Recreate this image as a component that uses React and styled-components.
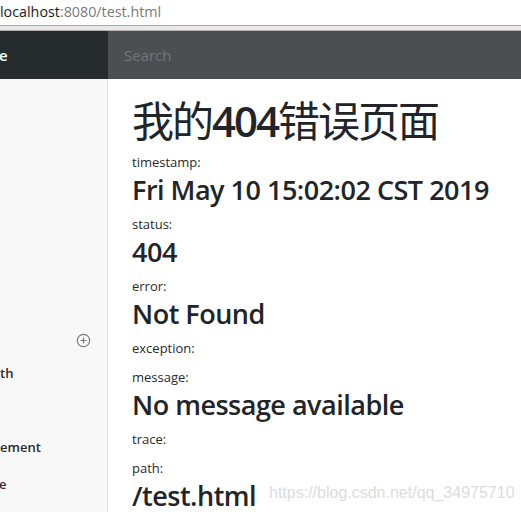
import React from "react";
import styled, { createGlobalStyle } from "styled-components";

const Global = createGlobalStyle`
  html, body { margin: 0; padding: 0; background: #fff; }
  body { font-family: "Open Sans", "Noto Sans CJK SC", sans-serif; overflow: hidden; }
`;

const Page = styled.div`
  width: 521px;
  height: 512px;
  display: flex;
  flex-direction: column;
  position: relative;
  overflow: hidden;
`;

const AddressBar = styled.div`
  display: flex;
  align-items: center;
  font-family: "Open Sans", sans-serif;
  font-size: 14.3px;
  white-space: nowrap;
  border-bottom: 1px solid #a6a6a6;
  box-sizing: border-box;
  height: 26px;
  padding-bottom: 2px;
  background: #fff;
`;

const Host = styled.span`
  color: ${(p) => (p.$dim ? "#7a7a7a" : "#1a1a1a")};
`;

const ChromeStrip = styled.div`
  height: 4px;
  background: #e9e9e9;
  border-bottom: 1px solid #b4aeae;
`;

const NavBar = styled.div`
  height: 48px;
  display: flex;
  background: #4b4f52;
`;

const Brand = styled.div`
  width: 108px;
  flex-shrink: 0;
  background: #262b2d;
  color: #fff;
  font-size: 15px;
  font-weight: 600;
  display: flex;
  align-items: center;
  overflow: hidden;
  white-space: nowrap;
  text-indent: -1px;
`;

const SearchBox = styled.div`
  flex: 1;
  display: flex;
  align-items: center;
  padding-left: 16px;
  color: #72777a;
  font-size: 15px;
`;

const Body = styled.div`
  flex: 1;
  display: flex;
  min-height: 0;
`;

const Sidebar = styled.div`
  width: 107px;
  flex-shrink: 0;
  background: #f8f8f8;
  border-right: 1px solid #e6e6e6;
  display: flex;
  flex-direction: column;
  overflow: hidden;
  padding-top: 250px;
`;

const SideHeader = styled.div`
  height: 22px;
  display: flex;
  justify-content: flex-end;
  align-items: center;
  padding-right: 16px;
  color: #7c7c7c;
`;

const SideItem = styled.div`
  height: 37px;
  display: flex;
  align-items: center;
  font-size: 13px;
  font-weight: 600;
  color: #2b2b2b;
  white-space: nowrap;
  margin-top: ${(p) => (p.$first ? 3 : 0)}px;
  margin-left: ${(p) => p.$shift || 0}px;
`;

const Main = styled.div`
  flex: 1;
  padding: 12px 24px 0;
  color: #212529;
  min-width: 0;
`;

const Title = styled.h1`
  margin: 0 0 3px;
  font-size: 42px;
  font-weight: 400;
  line-height: 56px;
  font-family: "Noto Sans CJK SC", "Open Sans", sans-serif;
  letter-spacing: -2px;
  white-space: nowrap;
`;

const Num = styled.span`
  font-weight: 600;
  font-family: "Open Sans", sans-serif;
`;

const Field = styled.div`
  margin-bottom: ${(p) => (p.$empty ? 9 : 7)}px;
`;

const Label = styled.div`
  font-size: 13px;
  line-height: 20px;
  color: #2a2a2a;
`;

const Value = styled.div`
  font-size: 27px;
  line-height: 35px;
  font-weight: 600;
  letter-spacing: -0.5px;
  color: #212529;
  white-space: nowrap;
`;

const Watermark = styled.div`
  position: absolute;
  left: 269px;
  top: 484px;
  font-family: "Liberation Sans", Arial, sans-serif;
  font-size: 16px;
  color: #dcdcdc;
  white-space: nowrap;
`;

const fields = [
  ["timestamp:", "Fri May 10 15:02:02 CST 2019"],
  ["status:", "404"],
  ["error:", "Not Found"],
  ["exception:", ""],
  ["message:", "No message available"],
  ["trace:", ""],
  ["path:", "/test.html"],
];

export default function App() {
  return (
    <Page>
      <Global />
      <AddressBar>
        <Host>localhost</Host>
        <Host $dim>:8080/test.html</Host>
      </AddressBar>
      <ChromeStrip />
      <NavBar>
        <Brand>e</Brand>
        <SearchBox>Search</SearchBox>
      </NavBar>
      <Body>
        <Sidebar>
          <SideHeader>
            <svg width="15" height="15" viewBox="0 0 16 16" fill="none" stroke="currentColor" strokeWidth="1.3">
              <circle cx="8" cy="8" r="6.6" />
              <path d="M8 4.8v6.4M4.8 8h6.4" />
            </svg>
          </SideHeader>
          <SideItem $first>th</SideItem>
          <SideItem />
          <SideItem>ement</SideItem>
          <SideItem $shift={-1}>e</SideItem>
        </Sidebar>
        <Main>
          <Title>
            我的<Num>404</Num>错误页面
          </Title>
          {fields.map(([label, value]) => (
            <Field key={label} $empty={!value}>
              <Label>{label}</Label>
              {value && <Value>{value}</Value>}
            </Field>
          ))}
        </Main>
      </Body>
      <Watermark>https://blog.csdn.net/qq_34975710</Watermark>
    </Page>
  );
}
